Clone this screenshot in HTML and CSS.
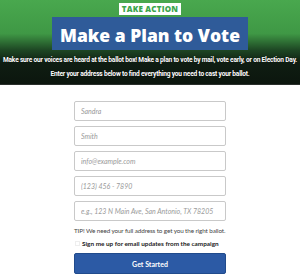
FILE: index.html
```html
<!DOCTYPE html>
<html>
	<head>
		<meta charset="UTF-8">
		<title>Make a Plan to Vote</title>
		<link rel="stylesheet" href="styles.css">
	</head>
	<body>
		<div class="hero">
			<div class="tag">TAKE ACTION</div>
			<h1 class="title">Make a Plan to Vote</h1>
			<p class="lead">Make sure our voices are heard at the ballot box! Make a plan to vote by mail, vote early, or on Election Day.</p>
			<p class="lead">Enter your address below to find everything you need to cast your ballot.</p>
		</div>

		<form class="form">
			<input class="field" type="text" placeholder="Sandra">
			<input class="field" type="text" placeholder="Smith">
			<input class="field" type="text" placeholder="info@example.com">
			<input class="field" type="text" placeholder="(123) 456 - 7890">
			<input class="field" type="text" placeholder="e.g., 123 N Main Ave, San Antonio, TX 78205">
			<p class="tip">TIP! We need your full address to get you the right ballot.</p>
			<label class="check"><span class="box"></span>Sign me up for email updates from the campaign</label>
			<button class="btn" type="button">Get Started</button>
		</form>
	</body>
</html>
```

FILE: styles.css
```css
*{
	margin: 0;
	padding: 0;
	box-sizing: border-box;
}
body{
	background: #fff;
	font-family: Lato, "Open Sans", sans-serif;
}
.hero{
	height: 85px;
	padding-top: 3px;
	text-align: center;
	background: linear-gradient(to bottom, #49a84e 0%, #3f9845 40%, #1d4523 60%, #0f1d12 75%, #0c160e 100%);
	border-bottom: 1px solid #2a2f2b;
}
.tag{
	position: relative;
	z-index: 1;
	display: inline-block;
	height: 12px;
	padding: 0 3px;
	background: #fff;
	color: #3ba54b;
	font-family: "Open Sans", sans-serif;
	font-weight: 800;
	font-size: 8px;
	line-height: 12px;
	letter-spacing: 0.2px;
	vertical-align: top;
}
.title{
	width: 196px;
	height: 33px;
	margin: -5px auto 0;
	background: #2f5b99;
	color: #fff;
	font-family: "Open Sans", sans-serif;
	font-weight: 800;
	font-size: 17.5px;
	line-height: 36px;
	white-space: nowrap;
}
.lead{
	color: #fff;
	font-family: Roboto, sans-serif;
	font-weight: 700;
	font-size: 6.6px;
	line-height: 14px;
	letter-spacing: -0.2px;
	white-space: nowrap;
	text-shadow: 0 0 1px #000;
}
.lead:first-of-type{
	margin-top: 3px;
}
.form{
	width: 152px;
	margin: 16px auto 0;
}
.field{
	display: block;
	width: 100%;
	height: 20px;
	margin-bottom: 5px;
	padding: 0 6px;
	border: 1px solid #c9c9c9;
	border-radius: 2px;
	font-family: Lato, sans-serif;
	font-size: 7px;
	font-style: italic;
	color: #555;
	background: #fff;
}
.field::placeholder{
	color: #9a9a9a;
}
.tip{
	margin-top: 2px;
	font-size: 6.3px;
	line-height: 9px;
	color: #444;
	letter-spacing: -0.1px;
}
.check{
	display: flex;
	align-items: center;
	margin-top: 4px;
	height: 9px;
	font-size: 6.4px;
	font-weight: 700;
	color: #222;
}
.box{
	width: 5px;
	height: 5px;
	margin: 0 2px 0 1px;
	border: 1px solid #eee;
}
.btn{
	display: block;
	width: 100%;
	height: 21px;
	margin-top: 5px;
	border: 1px solid #214b8c;
	border-radius: 2px;
	background: #2c5aa5;
	color: #fff;
	font-family: Lato, sans-serif;
	font-weight: 700;
	font-size: 7px;
}
```
